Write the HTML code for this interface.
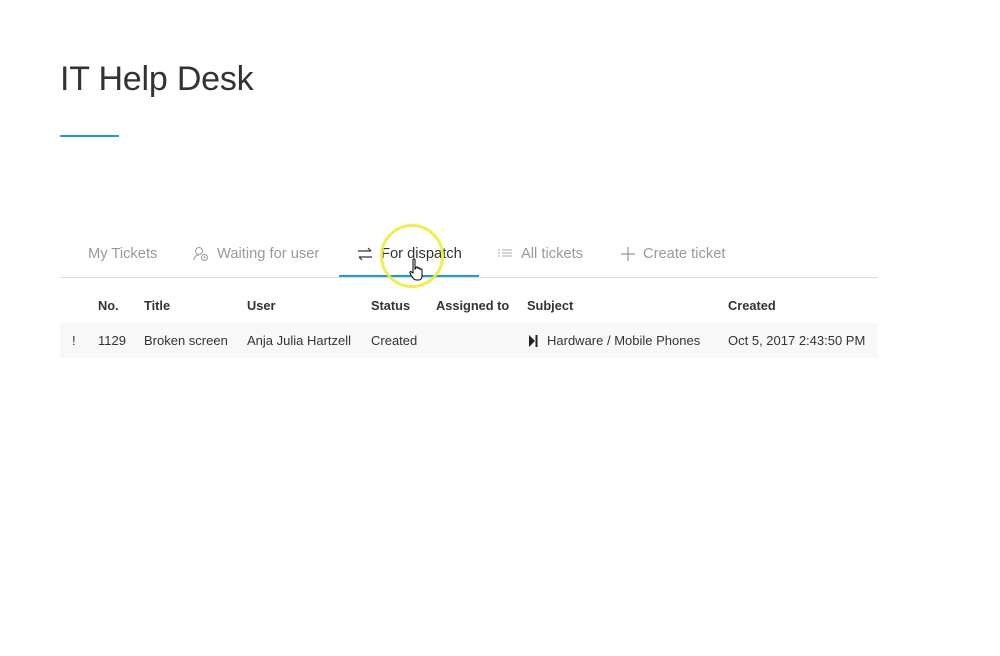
<!DOCTYPE html>
<html><head><style>
body{margin:0;width:1000px;height:656px;background:#fff;font-family:"Liberation Sans",sans-serif;position:relative;overflow:hidden}
.a{position:absolute;white-space:nowrap}
h1{position:absolute;left:60px;top:60px;margin:0;font-weight:normal;font-size:34px;color:#333;letter-spacing:-0.2px}
.tab{font-size:14.7px;color:#999;top:246px}
.th{font-size:12.8px;font-weight:bold;color:#333;top:298px}
.td{font-size:13px;color:#333;top:333px}
</style></head><body>
<h1>IT Help Desk</h1>
<div class="a" style="left:60px;top:135px;width:59px;height:2px;background:#1a9ae0"></div>
<div class="a tab" style="left:88px">My Tickets</div>
<svg class="a" style="left:193px;top:246px" width="16" height="16" viewBox="0 0 16 16" fill="none" stroke="#999" stroke-width="1"><circle cx="6" cy="5" r="3.5"/><path d="M1 14c0-3 2-5 5-5"/><circle cx="11.5" cy="11.5" r="3"/><path d="M11.5 10v1.8h1.2"/></svg>
<div class="a tab" style="left:217px">Waiting for user</div>
<svg class="a" style="left:357px;top:247px" width="16" height="14" viewBox="0 0 16 14" fill="none" stroke="#333" stroke-width="1.2"><path d="M1 4h13M11 1l3 3M15 10H2M5 13l-3-3"/></svg>
<div class="a tab" style="left:381px;color:#333">For dispatch</div>
<div class="a" style="left:339px;top:275px;width:140px;height:2px;background:#1a9ae0"></div>
<svg class="a" style="left:498px;top:248px" width="15" height="12" viewBox="0 0 15 12" stroke="#aaa" stroke-width="1"><path d="M0 2h2M4 2h10M0 5h2M4 5h10M0 8h2M4 8h10"/></svg>
<div class="a tab" style="left:521px">All tickets</div>
<svg class="a" style="left:620px;top:246px" width="16" height="16" viewBox="0 0 16 16" stroke="#999" stroke-width="1.2"><path d="M8 1v14M1 8h14"/></svg>
<div class="a tab" style="left:643px">Create ticket</div>
<div class="a" style="left:60px;top:277px;width:818px;height:1px;background:#ddd"></div>
<div class="a th" style="left:98px">No.</div>
<div class="a th" style="left:144px">Title</div>
<div class="a th" style="left:247px">User</div>
<div class="a th" style="left:371px">Status</div>
<div class="a th" style="left:436px">Assigned to</div>
<div class="a th" style="left:527px">Subject</div>
<div class="a th" style="left:728px">Created</div>
<div class="a" style="left:60px;top:323px;width:818px;height:35px;background:#f8f8f8"></div>
<div class="a td" style="left:72px">!</div>
<div class="a td" style="left:98px">1129</div>
<div class="a td" style="left:144px">Broken screen</div>
<div class="a td" style="left:247px">Anja Julia Hartzell</div>
<div class="a td" style="left:371px">Created</div>
<svg class="a" style="left:529px;top:335px" width="10" height="12" viewBox="0 0 10 12"><path d="M0 0l6 6-6 6z" fill="#222"/><rect x="6.5" y="0" width="2" height="12" fill="#222"/></svg>
<div class="a td" style="left:547px">Hardware / Mobile Phones</div>
<div class="a td" style="left:728px">Oct 5, 2017 2:43:50 PM</div>
<div class="a" style="left:380px;top:224px;width:64px;height:64px;border:3px solid #ecec3a;border-radius:50%;box-sizing:border-box;opacity:.9"></div>
<svg class="a" style="left:409px;top:258px" width="18" height="24" viewBox="0 0 18 24" fill="#fff" stroke="#000" stroke-width="1"><path d="M4 2c0-1.5 2-1.5 2 0v9l1-1c0-1.5 2-1.5 2 0v1c0-1.5 2-1.5 2 0v1c0-1.5 2-1.5 2 0v6c0 2-1 4-3 4H7c-2 0-3-2-5-5l-1-2c-.5-1 .5-2 1.5-1L4 15z"/></svg>
</body></html>
